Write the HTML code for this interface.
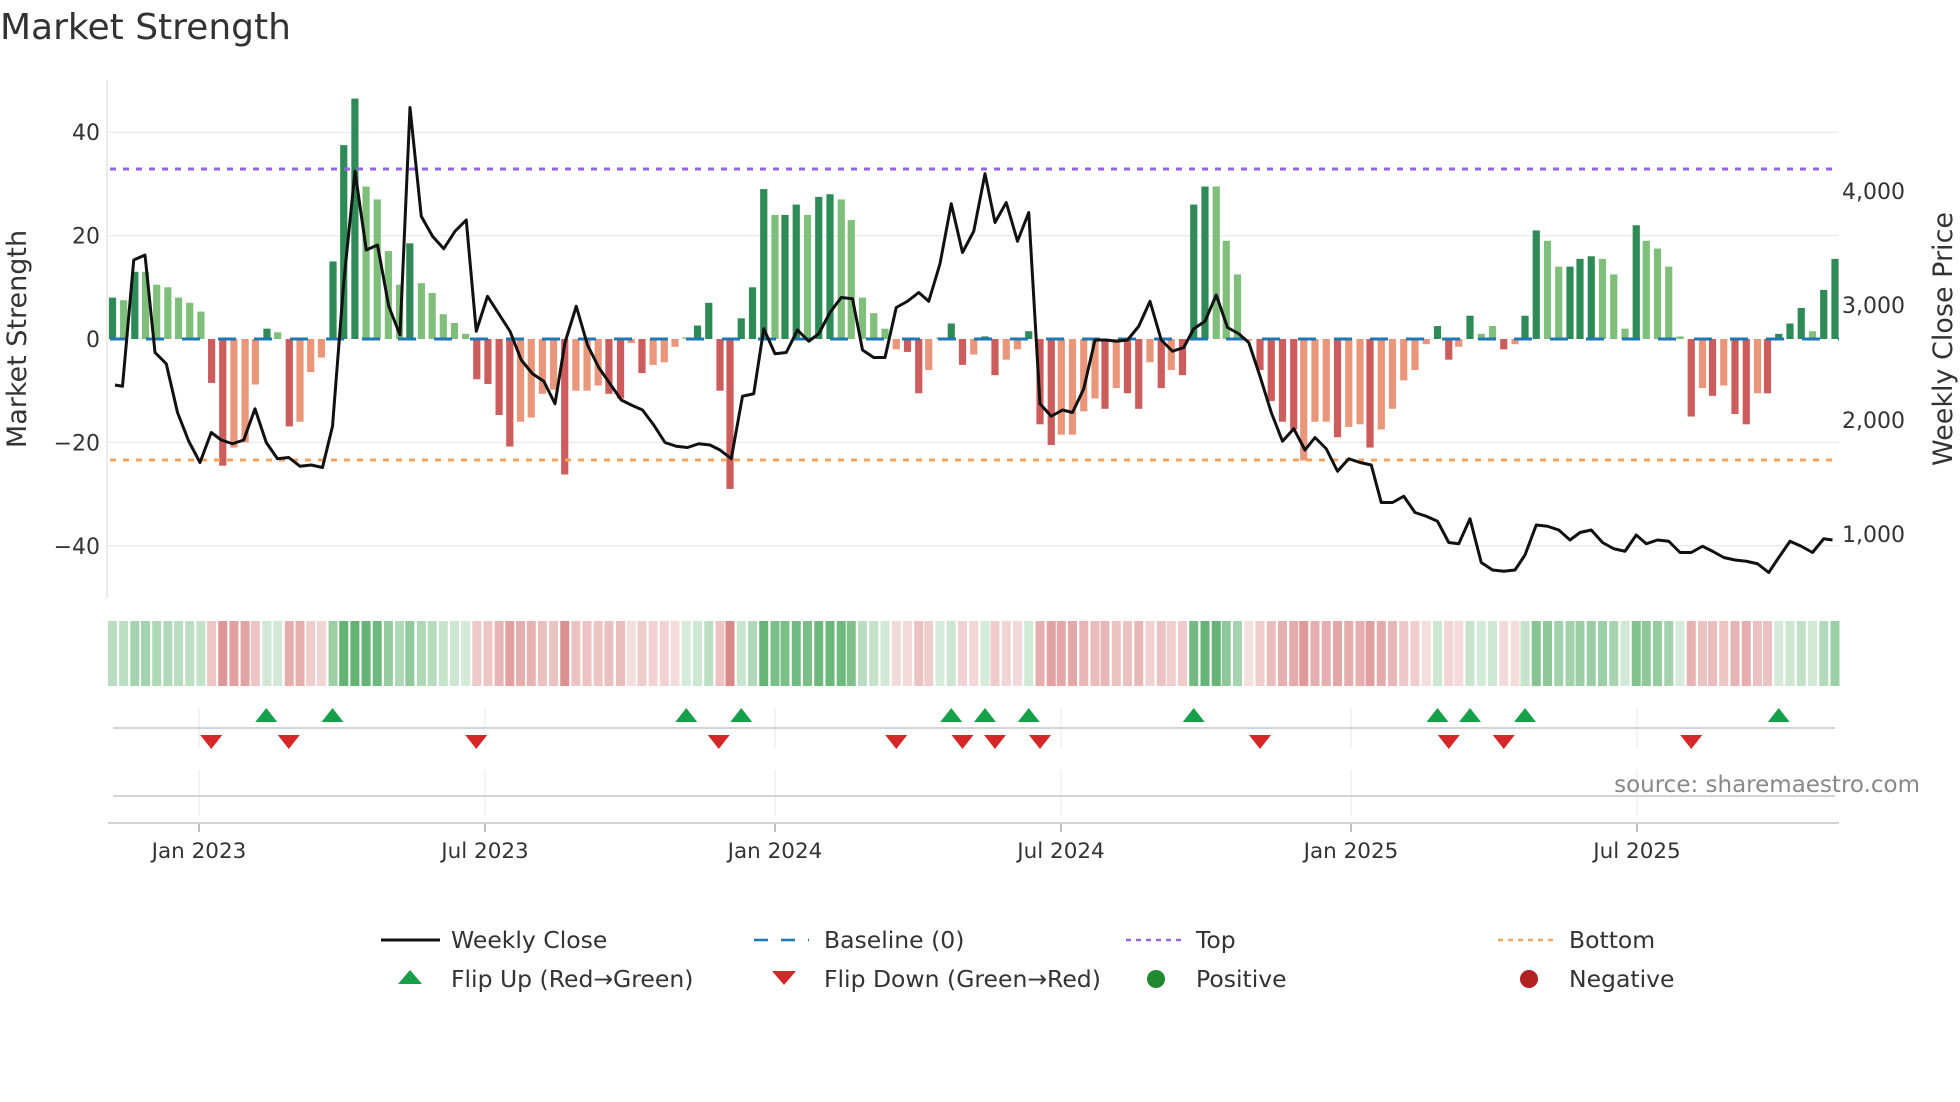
<!DOCTYPE html>
<html><head><meta charset="utf-8"><style>
html,body{margin:0;padding:0;background:#fff;width:1960px;height:1102px;overflow:hidden}
svg{display:block;font-family:"DejaVu Sans","Liberation Sans",sans-serif}
</style></head><body>
<svg id="s" width="1960" height="1102" viewBox="0 0 1960 1102" xmlns="http://www.w3.org/2000/svg">
<text x="0" y="39" font-size="36" fill="#333">Market Strength</text>
</svg>
<script>
var S=document.getElementById('s'),h='';
function Y(v){return 339-v*5.17}
function P(d){return d*1.25}
[40,20,-20,-40].forEach(function(v){h+='<line x1="107" x2="1839" y1="'+Y(v)+'" y2="'+Y(v)+'" stroke="#ececec" stroke-width="1.5"/>';});
h+='<line x1="107" x2="107" y1="80" y2="598" stroke="#e6e6e6" stroke-width="1.5"/>';
var b1=[[252,8,1],[277,7.5,0],[302,13,1],[326,13,0],[351,10.5,0],[376,10,0],[400,8,0],[425,7,0],[450,5.3,0],[474,-8.5,1],[499,-24.5,1],[524,-21,0],[549,-20,0],[572,-8.8,0],[598,2,1],[622,1.3,0],[648,-16.9,1],[672,-16,0],[696,-6.4,0],[720,-3.6,0],[746,15,1],[770,37.5,1],[795,46.5,1],[820,29.5,0],[845,27,0],[870,17,0],[895,10.5,0],[918,18.5,1],[944,10.8,0],[968,8.9,0],[993,4.8,0],[1018,3.1,0],[1043,1,0],[1068,-7.8,1],[1093,-8.7,1],[1118,-14.7,1],[1142,-20.8,1],[1166,-16,0],[1190,-15.2,0],[1215,-10.6,0],[1240,-9.8,0],[1265,-26.2,1],[1290,-10,0],[1315,-10,0],[1340,-9,0],[1364,-10.6,1],[1390,-11.5,1],[1414,-0.8,0],[1438,-6.6,1],[1463,-5,0],[1488,-4.5,0],[1512,-1.5,0],[1537,0.3,0]];
var b2=[[558,2.6,1],[567,7,1],[576,-10,1],[584,-29,1],[593,4,1],[602,10,1],[611,29,1],[620,24,0],[628,24,1],[637,26,1],[646,24,0],[655,27.5,1],[664,28,1],[673,27,0],[681,23,0],[690,8,0],[699,5,0],[708,2,0],[717,-2,0],[726,-2.5,1],[735,-10.5,1],[743,-6,0],[752,0.3,0],[761,3,1],[770,-5,1],[779,-3,0],[788,0.5,1],[796,-7,1],[805,-4,0],[814,-2,0],[823,1.5,1],[832,-16.5,1],[841,-20.5,1],[849,-18.5,0],[858,-18.5,0],[867,-14,0],[876,-11.5,0],[884,-13.5,1],[893,-9.5,0],[902,-10.5,1],[911,-13.5,1],[920,-4.5,0],[929,-9.5,1],[937,-6,0],[946,-7,1],[955,26,1],[964,29.5,1],[973,29.5,0],[981,19,0],[990,12.5,0],[999,-0.3,0],[1008,-6,1],[1017,-12,1],[1026,-16,1],[1035,-17.5,1],[1043,-23.5,0],[1052,-16,0],[1061,-16,0],[1070,-19,1],[1079,-17,0],[1088,-16.5,0],[1096,-21,1],[1105,-17.5,0],[1114,-13.5,0],[1123,-8,0],[1132,-6,0],[1141,-1,0],[1150,2.5,1],[1159,-4,1],[1167,-1.5,0],[1176,4.5,1],[1185,1,0],[1194,2.5,0],[1203,-2,1],[1212,-1,0],[1220,4.5,1],[1229,21,1],[1238,19,0],[1247,14,0],[1256,14,1],[1264,15.5,1],[1273,16,1],[1282,15.5,0],[1291,12.5,0],[1300,2,0],[1309,22,1],[1317,19,0],[1326,17.5,0],[1335,14,0],[1344,0.5,0],[1353,-15,1],[1362,-9.5,0],[1370,-11,1],[1379,-9,0],[1388,-14.5,1],[1397,-16.5,1],[1406,-10.5,0],[1414,-10.5,1],[1423,1,1],[1432,3,1],[1441,6,1],[1450,1.5,0],[1459,9.5,1],[1468,15.5,1]];
var bars=b1.map(function(b){return [b[0]/2.24,b[1],b[2]]}).concat(b2.map(function(b){return [b[0]*1.25,b[1],b[2]]}));
bars.forEach(function(b){var x=b[0],v=b[1],c=v>=0?(b[2]?'#2e8b57':'#7fbf7b'):(b[2]?'#cd5c5c':'#e9967a');
var y0=Y(0),y1=Y(v);h+='<rect x="'+(x-3.6)+'" y="'+Math.min(y0,y1)+'" width="7.2" height="'+Math.max(0.6,Math.abs(y1-y0))+'" fill="'+c+'"/>';
var a=Math.min(1,0.25+Math.abs(v)/40);var hc=v>=0?'rgba(60,160,80,'+(a*0.8)+')':'rgba(200,80,80,'+(a*0.7)+')';
h+='<rect x="'+(x-4.5)+'" y="621" width="9" height="65" fill="'+hc+'"/>';});
h+='<line x1="110" x2="1839" y1="339" y2="339" stroke="#1f77b4" stroke-width="3" stroke-dasharray="18,18"/>';
h+='<line x1="110" x2="1839" y1="169" y2="169" stroke="#9467dd" stroke-width="3" stroke-dasharray="6,7"/>';
h+='<line x1="110" x2="1839" y1="460" y2="460" stroke="#f4a460" stroke-width="3" stroke-dasharray="6,7"/>';
var pl=[[92,308],[98,309],[107,208],[116,204],[124,282],[133,291],[142,330],[151,353],[160,370],[169,346],[177,352],[186,355],[195,352],[204,327],[213,354],[222,367],[231,366],[240,373],[249,372],[258,374],[266,341],[275,226],[284,137],[293,200],[302,196],[311,245],[320,268],[328,86],[337,173],[346,189],[355,199],[364,185],[373,176],[381,265],[390,237],[399,251],[408,265],[417,288],[426,299],[435,305],[444,323],[452,274],[461,245],[470,276],[479,294],[488,307],[497,320],[505,324],[514,328],[523,340],[532,354],[541,357],[550,358],[559,355],[568,356],[576,360],[585,367],[594,317],[603,315],[611,263],[620,283],[629,282],[638,264],[647,273],[655,267],[664,250],[673,238],[682,239],[690,280],[699,286],[708,286],[717,246],[726,241],[735,234],[743,241],[752,211],[761,163],[770,202],[779,185],[788,139],[796,178],[805,162],[814,193],[823,170],[832,323],[841,333],[850,328],[858,330],[867,311],[876,272],[885,272],[893,273],[902,272],[911,261],[920,241],[929,272],[938,281],[947,278],[955,263],[964,257],[973,236],[982,262],[991,267],[999,274],[1008,301],[1017,330],[1026,353],[1035,343],[1044,360],[1052,350],[1061,359],[1070,377],[1079,367],[1088,370],[1097,372],[1105,402],[1114,402],[1123,397],[1132,410],[1141,413],[1150,417],[1159,434],[1167,435],[1176,415],[1185,450],[1194,456],[1203,457],[1212,456],[1220,444],[1229,420],[1238,421],[1247,424],[1256,432],[1264,426],[1273,424],[1282,434],[1291,439],[1300,441],[1309,428],[1317,435],[1326,432],[1335,433],[1344,442],[1353,442],[1362,437],[1370,441],[1379,446],[1388,448],[1397,449],[1406,451],[1415,458],[1423,446],[1432,433],[1441,437],[1450,442],[1459,431],[1466,432]];
h+='<polyline fill="none" stroke="#111" stroke-width="3" stroke-linejoin="round" points="'+pl.map(function(p){return P(p[0])+','+P(p[1])}).join(' ')+'"/>';
[[40,'40'],[20,'20'],[0,'0'],[-20,'\u221220'],[-40,'\u221240']].forEach(function(t){h+='<text x="100" y="'+(Y(t[0])+8)+'" font-size="22" fill="#333" text-anchor="end">'+t[1]+'</text>';});
[[191,'4,000'],[305,'3,000'],[420,'2,000'],[534,'1,000']].forEach(function(t){h+='<text x="1842" y="'+(t[0]+8)+'" font-size="22" fill="#333">'+t[1]+'</text>';});
h+='<text transform="translate(26,339) rotate(-90)" font-size="27" fill="#333" text-anchor="middle">Market Strength</text>';
h+='<text transform="translate(1952,339) rotate(-90)" font-size="27" fill="#333" text-anchor="middle">Weekly Close Price</text>';
var tx=[199,485,775,1061,1351,1637],tl=['Jan 2023','Jul 2023','Jan 2024','Jul 2024','Jan 2025','Jul 2025'];
tx.forEach(function(x,i){h+='<line x1="'+x+'" x2="'+x+'" y1="708" y2="748" stroke="#eceff2" stroke-width="1.5"/><line x1="'+x+'" x2="'+x+'" y1="770" y2="815" stroke="#eceff2" stroke-width="1.5"/><line x1="'+x+'" x2="'+x+'" y1="823" y2="832" stroke="#aaa" stroke-width="1.5"/><text x="'+x+'" y="858" font-size="21.5" fill="#333" text-anchor="middle">'+tl[i]+'</text>';});
h+='<line x1="113" x2="1835" y1="728" y2="728" stroke="#d4d4d4" stroke-width="2"/>';
h+='<line x1="113" x2="1835" y1="796" y2="796" stroke="#d4d4d4" stroke-width="2"/>';
h+='<line x1="108" x2="1839" y1="823" y2="823" stroke="#d4d4d4" stroke-width="2"/>';
[213,266,549,593,761,788,823,955,1150,1176,1220,1423].forEach(function(x){x=P(x);h+='<polygon points="'+(x-11)+',722 '+(x+11)+',722 '+x+',708" fill="#16a04a"/>';});
[169,231,381,575,717,770,796,832,1008,1159,1203,1353].forEach(function(x){x=P(x);h+='<polygon points="'+(x-11)+',735 '+(x+11)+',735 '+x+',749" fill="#d62728"/>';});
h+='<text x="1920" y="792" font-size="23" fill="#888" text-anchor="end">source: sharemaestro.com</text>';
var r1=948,r2=987,fs=23.5;
h+='<line x1="381" x2="440" y1="'+(r1-8)+'" y2="'+(r1-8)+'" stroke="#111" stroke-width="3"/><text x="451" y="'+r1+'" font-size="'+fs+'" fill="#333">Weekly Close</text>';
h+='<line x1="754" x2="809" y1="'+(r1-8)+'" y2="'+(r1-8)+'" stroke="#1f77b4" stroke-width="2.5" stroke-dasharray="14,13"/><text x="824" y="'+r1+'" font-size="'+fs+'" fill="#333">Baseline (0)</text>';
h+='<line x1="1126" x2="1181" y1="'+(r1-8)+'" y2="'+(r1-8)+'" stroke="#9467dd" stroke-width="2.5" stroke-dasharray="5,5"/><text x="1196" y="'+r1+'" font-size="'+fs+'" fill="#333">Top</text>';
h+='<line x1="1498" x2="1553" y1="'+(r1-8)+'" y2="'+(r1-8)+'" stroke="#f4a460" stroke-width="2.5" stroke-dasharray="5,5"/><text x="1569" y="'+r1+'" font-size="'+fs+'" fill="#333">Bottom</text>';
h+='<polygon points="398,'+(r2-3)+' 422,'+(r2-3)+' 410,'+(r2-17)+'" fill="#16a04a"/><text x="451" y="'+r2+'" font-size="'+fs+'" fill="#333">Flip Up (Red\u2192Green)</text>';
h+='<polygon points="772,'+(r2-16)+' 796,'+(r2-16)+' 784,'+(r2-2)+'" fill="#d62728"/><text x="824" y="'+r2+'" font-size="'+fs+'" fill="#333">Flip Down (Green\u2192Red)</text>';
h+='<circle cx="1156" cy="'+(r2-8)+'" r="9" fill="#1f8a2e"/><text x="1196" y="'+r2+'" font-size="'+fs+'" fill="#333">Positive</text>';
h+='<circle cx="1529" cy="'+(r2-8)+'" r="9" fill="#b22222"/><text x="1569" y="'+r2+'" font-size="'+fs+'" fill="#333">Negative</text>';
S.insertAdjacentHTML('beforeend',h);
</script>
</body></html>
